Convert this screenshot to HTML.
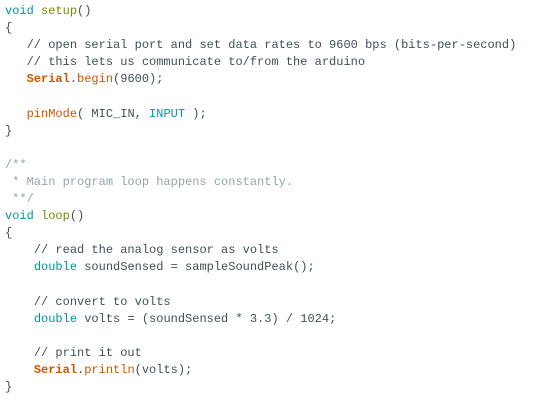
<!DOCTYPE html>
<html><head><style>
html,body{margin:0;padding:0;background:#fff;width:554px;height:409px;overflow:hidden}
pre{margin:0;position:absolute;left:5px;top:3px;font-family:"Liberation Mono",monospace;font-size:12px;line-height:17.1px;color:#434f54}
.k{color:#00979c}.f{color:#d35400}.g{color:#728e00}.s{color:#d35400;font-weight:bold}.c{color:#434f54}.b{color:#95a5a6}
</style></head><body>
<pre><span class="k">void</span> <span class="g">setup</span>()
{
   <span class="c">// open serial port and set data rates to 9600 bps (bits-per-second)</span>
   <span class="c">// this lets us communicate to/from the arduino</span>
   <span class="s">Serial</span>.<span class="f">begin</span>(9600);

   <span class="f">pinMode</span>( MIC_IN, <span class="k">INPUT</span> );
}

<span class="b">/**
 * Main program loop happens constantly.
 **/</span>
<span class="k">void</span> <span class="g">loop</span>()
{
    <span class="c">// read the analog sensor as volts</span>
    <span class="k">double</span> soundSensed = sampleSoundPeak();

    <span class="c">// convert to volts</span>
    <span class="k">double</span> volts = (soundSensed * 3.3) / 1024;

    <span class="c">// print it out</span>
    <span class="s">Serial</span>.<span class="f">println</span>(volts);
}</pre>
</body></html>
